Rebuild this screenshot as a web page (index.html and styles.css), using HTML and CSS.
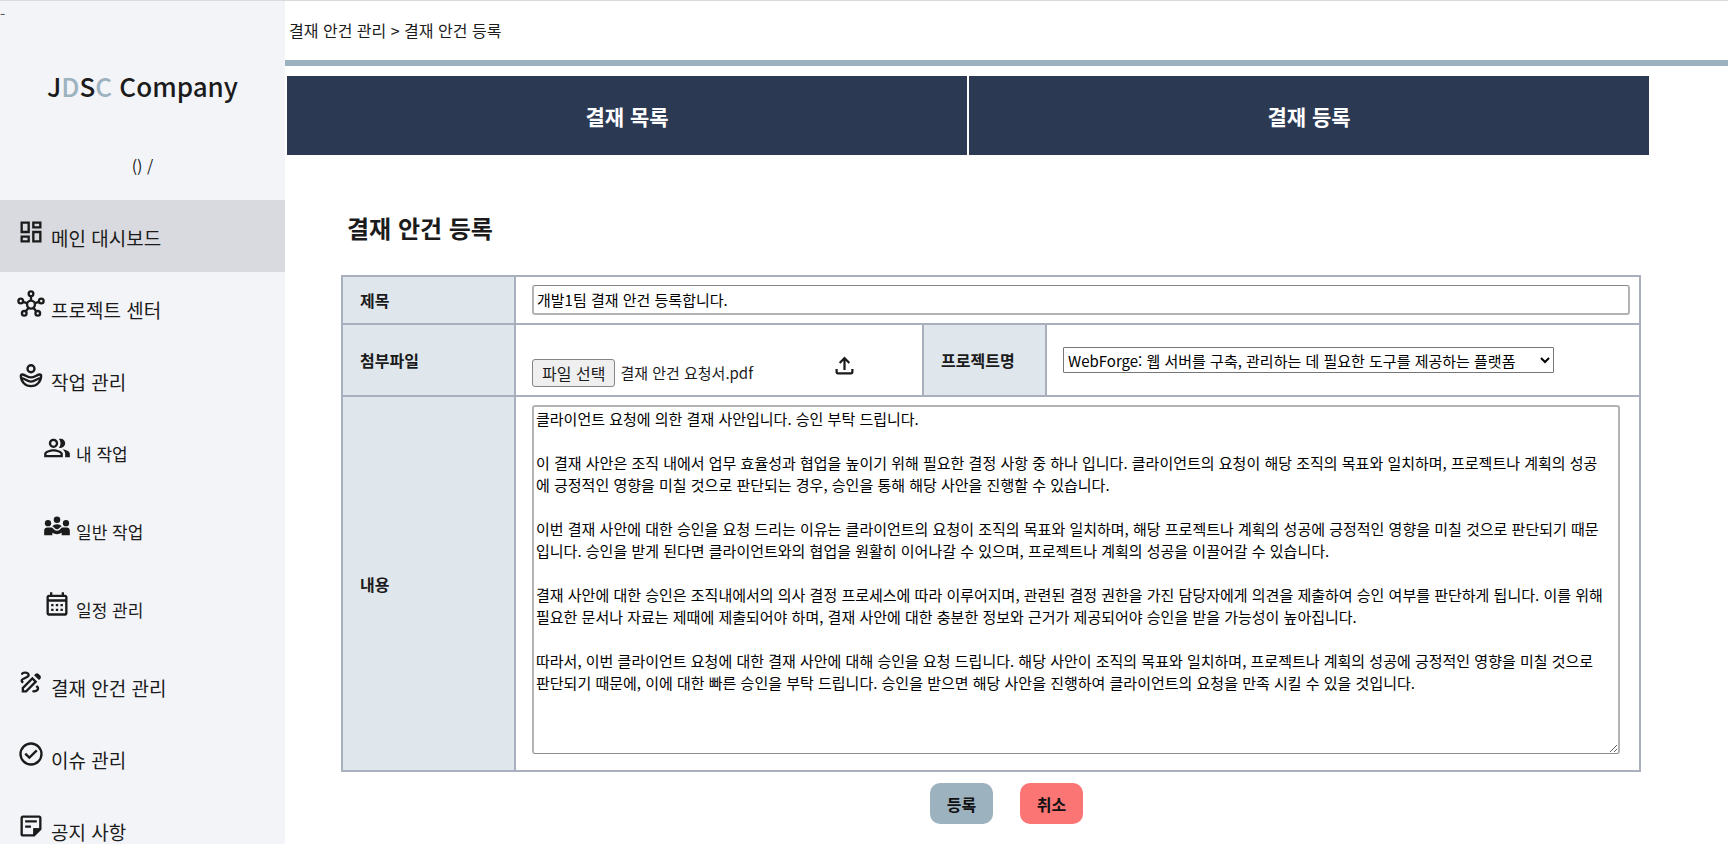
FILE: index.html
```html
<!DOCTYPE html>
<html lang="ko">
<head>
<meta charset="utf-8">
<title>결재 안건 등록</title>
<link rel="stylesheet" href="styles.css">
</head>
<body>
<div class="app">
  <aside class="sidebar">
    <span class="marker">-</span>
    <a class="logo" href="#">J<span class="logo-accent">D</span>S<span class="logo-accent">C</span> Company</a>
    <p class="user">() /</p>
    <nav>
      <ul class="menu">
        <li><a class="item active" href="#"><svg class="icon" viewBox="0 0 24 24"><path d="M19 5v2h-4V5h4M9 5v6H5V5h4m10 8v6h-4v-6h4M9 17v2H5v-2h4M21 3h-8v6h8V3zM11 3H3v10h8V3zm10 8h-8v10h8V11zm-10 4H3v6h8v-6z"/></svg><span>메인 대시보드</span></a></li>
        <li><a class="item" href="#"><svg class="icon line" viewBox="0 0 24 24"><circle cx="12" cy="12.5" r="3.4"/><circle cx="12" cy="3.2" r="2"/><circle cx="3.2" cy="9.4" r="2"/><circle cx="20.8" cy="9.4" r="2"/><circle cx="6.2" cy="20" r="2"/><circle cx="17.8" cy="20" r="2"/><path d="M12 5.2v3.9M5.1 10.1l3.6 1.2M18.9 10.1l-3.6 1.2M7.4 18.4l2.5-3.1M16.6 18.4l-2.5-3.1"/></svg><span>프로젝트 센터</span></a></li>
        <li><a class="item" href="#"><svg class="icon line" viewBox="0 0 24 24"><circle cx="12" cy="5.800" r="3"/><path d="M3.300 11.800c0-.8.600-1.200 1.400-1.100 3 .6 4.300 2.500 7.300 2.500s4.300-1.900 7.300-2.500c.8-.1 1.400.3 1.400 1.100 0 5.200-3.900 8.900-8.700 8.900s-8.700-3.700-8.700-8.900zM3.700 13.800c3 0 4.800 3 8.300 3s5.300-3 8.300-3"/></svg><span>작업 관리</span></a></li>
        <li><a class="item sub" href="#"><svg class="icon" viewBox="0 0 24 24"><path d="M16.67 13.13C18.04 14.060 19 15.320 19 17v3h4v-3c0-2.180-3.570-3.470-6.330-3.870zM15 12c2.210 0 4-1.790 4-4s-1.790-4-4-4c-.47 0-.91.1-1.330.24C14.500 5.270 15 6.580 15 8s-.5 2.730-1.330 3.760c.42.14.86.24 1.330.24zM9 12c2.210 0 4-1.790 4-4s-1.790-4-4-4-4 1.790-4 4 1.790 4 4 4zm0-6c1.100 0 2 .9 2 2s-.9 2-2 2-2-.9-2-2 .9-2 2-2zM9 13c-2.670 0-8 1.340-8 4v3h16v-3c0-2.660-5.330-4-8-4zm6 5H3v-.990C3.200 16.290 6.300 15 9 15s5.800 1.290 6 2v1z"/></svg><span>내 작업</span></a></li>
        <li><a class="item sub" href="#"><svg class="icon" viewBox="0 0 24 24"><circle cx="12" cy="6.600" r="2.800"/><circle cx="4.300" cy="9.600" r="2.700"/><circle cx="19.700" cy="9.600" r="2.700"/><path d="M1 20v-4c0-1.600 1.200-2.700 2.700-2.700h3c1 0 1.700.4 2.200 1.100.8 1.100 1.900 1.700 3.100 1.700s2.300-.6 3.100-1.700c.5-.7 1.200-1.100 2.200-1.100h3c1.500 0 2.700 1.100 2.700 2.700v4h-7v-2.200c-1.200.8-2.500 1.200-4 1.200s-2.800-.4-4-1.200V20zM8 12.300c.9-1.200 2.300-1.800 4-1.800s3.100.6 4 1.800c-.9.5-1.300.7-1.900 1.500-.6.7-1.300 1-2.100 1s-1.500-.3-2.100-1c-.6-.8-1-1-1.900-1.500z"/></svg><span>일반 작업</span></a></li>
        <li><a class="item sub" href="#"><svg class="icon" viewBox="0 0 24 24"><path d="M5 22c-1.100 0-2-.9-2-2V6c0-1.100.9-2 2-2h1V2h2v2h8V2h2v2h1c1.100 0 2 .9 2 2v14c0 1.100-.9 2-2 2zm0-2h14V10H5zM5 8h14V6H5zM7 12h2v2H7zm4 0h2v2h-2zm4 0h2v2h-2zM7 16h2v2H7zm4 0h2v2h-2zm4 0h2v2h-2z"/></svg><span>일정 관리</span></a></li>
        <li><a class="item" href="#"><svg class="icon" viewBox="0 0 24 24"><path d="M18.850 10.390l1.060-1.060c.78-.78.78-2.050 0-2.830L18.500 5.090c-.78-.78-2.050-.78-2.830 0l-1.060 1.060 4.240 4.240z"/><path fill-rule="evenodd" d="M13.190 7.560L4 16.760V21h4.240l9.190-9.190zM13.190 10.390L6 17.590V19h1.410l7.190-7.190z"/><path d="M19 17.500c0 2.190-2.540 3.500-5 3.500-.55 0-1-.45-1-1s.45-1 1-1c1.540 0 3-.73 3-1.500 0-.47-.48-.87-1.230-1.200l1.480-1.480c1.070.63 1.750 1.470 1.750 2.680zM4.580 13.350C3.610 12.790 3 12.060 3 11c0-1.800 1.890-2.630 3.560-3.360C7.590 7.180 9 6.560 9 6c0-.41-.78-1-2-1-1.260 0-1.800.61-1.830.64-.35.41-.98.46-1.400.12-.41-.34-.49-.95-.15-1.380C3.730 4.240 4.760 3 7 3s4 1.320 4 3c0 1.870-1.930 2.720-3.640 3.470C6.420 9.880 5 10.500 5 11c0 .31.43.6 1.070.86z"/></svg><span>결재 안건 관리</span></a></li>
        <li><a class="item" href="#"><svg class="icon" viewBox="0 0 24 24"><path d="M10.600 16.600l7.050-7.050-1.400-1.400-5.650 5.650-2.850-2.850-1.400 1.400zM12 22q-2.075 0-3.900-.788-1.825-.787-3.175-2.137T2.788 15.900Q2 14.075 2 12t.788-3.900 2.137-3.175T8.100 2.788Q9.925 2 12 2t3.900.788 3.175 2.137 2.137 3.175T22 12t-.788 3.900-2.137 3.175-3.175 2.137Q14.075 22 12 22zm0-2q3.350 0 5.675-2.325T20 12t-2.325-5.675T12 4 6.325 6.325 4 12t2.325 5.675T12 20z"/></svg><span>이슈 관리</span></a></li>
        <li><a class="item" href="#"><svg class="icon" viewBox="0 0 24 24"><path d="M5 21c-1.100 0-2-.9-2-2V5c0-1.100.9-2 2-2h14c1.100 0 2 .9 2 2v10l-6 6zm0-2h9v-5h5V5H5zM7 7h10v2H7zm0 4.500h5v2H7z"/><path d="M14 14h6v1l-5 5h-1z"/></svg><span>공지 사항</span></a></li>
      </ul>
    </nav>
  </aside>

  <main class="content">
    <header class="crumbs">결재 안건 관리 &gt; 결재 안건 등록</header>
    <nav class="tabs">
      <a class="tab" href="#">결재 목록</a>
      <a class="tab" href="#">결재 등록</a>
    </nav>
    <form class="form">
      <h1 class="title">결재 안건 등록</h1>
      <table class="grid">
        <colgroup><col class="c-label"><col class="c-file"><col class="c-label2"><col></colgroup>
        <tr>
          <th><label for="subject">제목</label></th>
          <td colspan="3"><input class="subject" id="subject" type="text" value="개발1팀 결재 안건 등록합니다."></td>
        </tr>
        <tr class="row-file">
          <th>첨부파일</th>
          <td>
            <div class="file">
              <input class="file-input" id="file" type="file">
              <label class="file-button" for="file">파일 선택</label>
              <span class="file-name">결재 안건 요청서.pdf</span>
              <svg class="upload" viewBox="0 0 24 24"><path d="M11 16V7.850l-2.600 2.600L7 9l5-5 5 5-1.400 1.450-2.600-2.600V16zM6 20c-1.100 0-2-.9-2-2v-3h2v3h12v-3h2v3c0 1.100-.9 2-2 2z"/></svg>
            </div>
          </td>
          <th><label for="project">프로젝트명</label></th>
          <td><select class="project" id="project"><option>WebForge: 웹 서버를 구축, 관리하는 데 필요한 도구를 제공하는 플랫폼</option></select></td>
        </tr>
        <tr>
          <th><label for="body">내용</label></th>
          <td colspan="3"><textarea class="body-text" id="body" spellcheck="false">클라이언트 요청에 의한 결재 사안입니다. 승인 부탁 드립니다.

이 결재 사안은 조직 내에서 업무 효율성과 협업을 높이기 위해 필요한 결정 사항 중 하나 입니다. 클라이언트의 요청이 해당 조직의 목표와 일치하며, 프로젝트나 계획의 성공
에 긍정적인 영향을 미칠 것으로 판단되는 경우, 승인을 통해 해당 사안을 진행할 수 있습니다.

이번 결재 사안에 대한 승인을 요청 드리는 이유는 클라이언트의 요청이 조직의 목표와 일치하며, 해당 프로젝트나 계획의 성공에 긍정적인 영향을 미칠 것으로 판단되기 때문
입니다. 승인을 받게 된다면 클라이언트와의 협업을 원활히 이어나갈 수 있으며, 프로젝트나 계획의 성공을 이끌어갈 수 있습니다.

결재 사안에 대한 승인은 조직내에서의 의사 결정 프로세스에 따라 이루어지며, 관련된 결정 권한을 가진 담당자에게 의견을 제출하여 승인 여부를 판단하게 됩니다. 이를 위해
필요한 문서나 자료는 제때에 제출되어야 하며, 결재 사안에 대한 충분한 정보와 근거가 제공되어야 승인을 받을 가능성이 높아집니다.

따라서, 이번 클라이언트 요청에 대한 결재 사안에 대해 승인을 요청 드립니다. 해당 사안이 조직의 목표와 일치하며, 프로젝트나 계획의 성공에 긍정적인 영향을 미칠 것으로
판단되기 때문에, 이에 대한 빠른 승인을 부탁 드립니다. 승인을 받으면 해당 사안을 진행하여 클라이언트의 요청을 만족 시킬 수 있을 것입니다.</textarea></td>
        </tr>
      </table>
      <div class="actions">
        <button class="button submit" type="submit">등록</button>
        <button class="button cancel" type="button">취소</button>
      </div>
    </form>
  </main>
</div>
</body>
</html>
```
FILE: styles.css
```css
* { box-sizing: border-box; }

body {
  margin: 0;
  height: 100vh;
  overflow: hidden;
  border-top: 1px solid #d9dadf;
  background: #fff;
  color: #1b1b1b;
  font: 16px/24px "Noto Sans CJK KR", sans-serif;
}

input, select, textarea, button { font-family: inherit; }
a { color: inherit; text-decoration: none; }

.app { display: flex; min-height: 100vh; }

/* Sidebar */
.sidebar {
  position: relative;
  flex: 0 0 285px;
  background: #f3f4f8;
  text-align: center;
}
.marker { position: absolute; left: 0; top: 1px; font-size: 15px; color: #555; }
.logo {
  display: block;
  padding-top: 65px;
  font-size: 26px;
  line-height: 40px;
  font-weight: 500;
}
.logo-accent { color: #9db2bf; }
.user { margin: 48px 0 22px; }

.menu { margin: 0; padding: 0; list-style: none; }
.item {
  display: flex;
  align-items: center;
  gap: 6px;
  height: 72px;
  padding: 0 0 2px 17px;
  font-size: 19px;
  line-height: 28px;
}
.item span { padding-top: 6px; }
.item.active { background: #d9dadf; }
.item.sub { height: 78px; padding: 0 0 8px 43px; gap: 5px; font-size: 17px; }
.icon { flex: none; width: 28px; height: 28px; margin-bottom: 6px; fill: #1b1b1b; }
.line { fill: none; stroke: #1b1b1b; stroke-width: 2; }

/* Content */
.content { flex: 1; min-width: 0; }
.crumbs {
  height: 65px;
  padding: 17px 4px 0;
  border-bottom: 6px solid #9db2bf;
}
.tabs { display: flex; gap: 2px; margin: 10px 79px 0 2px; }
.tab {
  flex: 1;
  padding: 25px 0 23px;
  background: #2b3953;
  color: #fff;
  font-size: 21px;
  line-height: 31px;
  font-weight: 700;
  text-align: center;
}

.form { margin: 55px 87px 0 56px; }
.title { margin: 0 0 29px 6px; font-size: 24px; line-height: 36px; font-weight: 700; }

.grid { width: 100%; border-collapse: collapse; table-layout: fixed; }
.grid th, .grid td { border: 2px solid #a9afbc; padding: 8px 9px 8px 16px; text-align: left; }
.grid th { background: #dfe7ed; padding-left: 17px; font-weight: 700; }
.c-label { width: 173px; }
.c-file { width: 408px; }
.c-label2 { width: 123px; }

.subject, .body-text {
  display: block;
  border: 2px solid #b4b4b4;
  border-radius: 3px;
  background: #fff;
  color: #000;
  font-size: 15px;
  line-height: 22px;
}
.subject {
  width: 100%;
  height: 30px;
  padding: 0 3px;
  border-width: 1px 2px 2px;
  border-top-color: #858585;
}

.file { display: flex; align-items: flex-end; gap: 5px; padding-top: 19px; }
.file-input { position: absolute; width: 1px; height: 1px; opacity: 0; }
.file-button {
  padding: 0 9px;
  border: 1px solid #858585;
  border-radius: 3px;
  background: #efefef;
  line-height: 26px;
}
.file-name { flex: 0 0 206px; font-size: 15px; line-height: 28px; }
.upload { width: 27px; height: 27px; margin-bottom: 8px; fill: #1b1b1b; }

.project {
  display: block;
  width: 491px;
  max-width: 100%;
  height: 26px;
  border: 1px solid #767676;
  border-radius: 1px;
  background: #fff;
  color: #000;
  font-size: 15px;
}

.body-text {
  width: calc(100% - 10px);
  height: 349px;
  margin-bottom: 8px;
  padding: 1px 2px;
  border-bottom: 1px solid #8e8e8e;
  overflow: hidden;
  resize: both;
}

.actions { display: flex; justify-content: center; gap: 27px; margin: 11px 0 0 31px; }
.button {
  width: 63px;
  height: 41px;
  padding: 0;
  border: 0;
  border-radius: 10px;
  color: #111;
  font-size: 16px;
  font-weight: 700;
}
.submit { background: #9db2bf; }
.cancel { background: #fb7575; }
```
